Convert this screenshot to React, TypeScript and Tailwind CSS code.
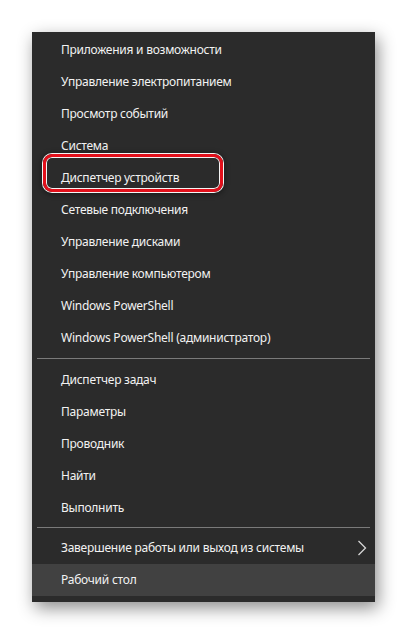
const groups = [
  [
    "Приложения и возможности",
    "Управление электропитанием",
    "Просмотр событий",
    "Система",
    "Диспетчер устройств",
    "Сетевые подключения",
    "Управление дисками",
    "Управление компьютером",
    "Windows PowerShell",
    "Windows PowerShell (администратор)",
  ],
  ["Диспетчер задач", "Параметры", "Проводник", "Найти", "Выполнить"],
];

function Item({ label, marked }: { label: string; marked?: boolean }) {
  return (
    <div className="relative h-8 flex items-center pl-[29px]">
      {marked && (
        <div className="absolute left-[11px] top-[-8px] w-[180px] h-[38px] rounded-[9px] border-[3px] border-[#e3101b] shadow-[0_0_0_1px_#f4f4f4,inset_0_0_0_1px_#f4f4f4,0_1px_5px_2px_rgba(0,0,0,0.35)]" />
      )}
      <span className="relative">{label}</span>
    </div>
  );
}

export default function App() {
  return (
    <div className="w-[407px] h-[634px] bg-white pt-8 pl-8">
      <div
        className="w-[343px] bg-[#2b2b2b] text-[#f2f2f2] text-[12px] tracking-[-0.25px] pt-[2px] pb-[6px] shadow-[3px_6px_16px_rgba(0,0,0,0.45)]"
        style={{ fontFamily: '"Segoe UI", "Noto Sans", "Open Sans", sans-serif' }}
      >
        {groups[0].map((g) => (
          <Item key={g} label={g} marked={g === "Диспетчер устройств"} />
        ))}
        <div className="h-px bg-[#7a7a7a] mx-[5px] mt-[4px] mb-[5px]" />
        {groups[1].map((g) => (
          <Item key={g} label={g} />
        ))}
        <div className="h-px bg-[#7a7a7a] mx-[5px] mt-[3px] mb-[4px]" />
        <div className="h-8 flex items-center pl-[29px] pr-[8px] justify-between">
          <span>Завершение работы или выход из системы</span>
          <svg width="10" height="16" viewBox="0 0 10 16" fill="none" stroke="#d6d6d6" strokeWidth="1.3">
            <path d="M1.5 1 L8.5 8 L1.5 15" />
          </svg>
        </div>
        <div className="h-8 flex items-center pl-[29px] bg-[#414141]">Рабочий стол</div>
      </div>
    </div>
  );
}
